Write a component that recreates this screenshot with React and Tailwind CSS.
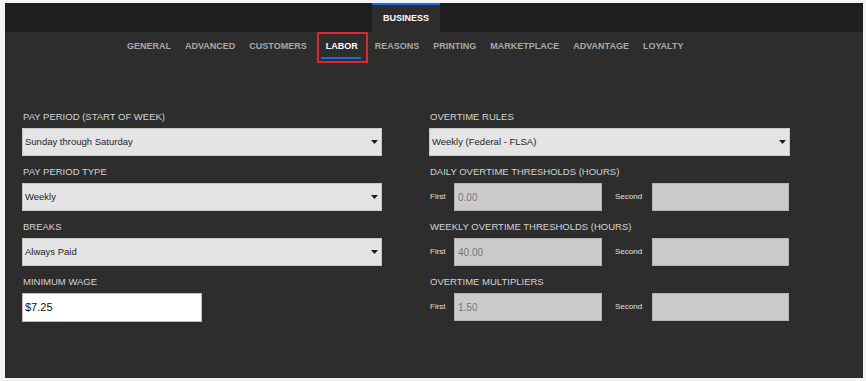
import React from "react";

const tabs = ["GENERAL", "ADVANCED", "CUSTOMERS", "LABOR", "REASONS", "PRINTING", "MARKETPLACE", "ADVANTAGE", "LOYALTY"];

const Arrow = () => (
  <svg width="7" height="4" viewBox="0 0 7 4" className="absolute right-[3px] top-1/2 -translate-y-1/2">
    <path d="M0 0 L7 0 L3.5 4 Z" fill="#1c1c1c" />
  </svg>
);

// fake select box, just the look of it
const Select = ({ value }) => (
  <div className="relative flex items-center h-[28px] bg-[#e4e4e4] border border-[#c8c8c8] pl-[2px] text-[9.5px] text-[#1e1e1e]">
    {value}
    <Arrow />
  </div>
);

const Field = ({ label, children }) => (
  <div className="flex flex-col">
    <div className="h-[12px] mb-[5px] leading-[12px] text-[9.5px] text-[#d4d4d4] pl-[1px]">{label}</div>
    {children}
  </div>
);

const Pair = ({ first }) => (
  <div className="flex items-center h-[28px]">
    <span className="w-[25px] pl-[1px] text-[8px] text-[#e0e0e0]">First</span>
    <div className="w-[148px] h-[28px] flex items-center bg-[#cbcbcb] border border-[#b3b3b3] pl-[3px] text-[10px] text-[#777]">
      {first}
    </div>
    <span className="ml-[13px] w-[37px] text-[8px] text-[#e0e0e0]">Second</span>
    <div className="w-[137px] h-[28px] bg-[#cbcbcb] border border-[#b3b3b3]" />
  </div>
);

export default function App() {
  return (
    <div
      className="w-full h-[381px] bg-[#f3f3f3] pt-[3px] pl-[5px] pr-[3px] pb-[3px]"
      style={{ fontFamily: '"Liberation Sans", Arial, sans-serif' }}
    >
      <div className="h-full flex flex-col bg-[#2d2d2d]">
        {/* top bar */}
        <div className="h-[29px] bg-[#1e1e1e] flex pl-[367px]">
          <div className="w-[68px] h-full bg-[#2d2d2d] border-t-2 border-[#1b6be0] flex items-center justify-center text-[9px] font-bold text-white">
            BUSINESS
          </div>
        </div>

        {/* sub tabs */}
        <div className="h-[30px] flex items-center pl-[122px] gap-[14px]">
          {tabs.map((t) =>
            t === "LABOR" ? (
              <div key={t} className="relative ml-[5px] mr-[3px] text-[9px] font-bold text-white">
                {t}
                <div className="absolute left-[-5px] right-[-3px] bottom-[-5px] h-[2px] bg-[#1b6be0]" />
                <div className="absolute left-[-9px] right-[-10px] top-[-8px] bottom-[-9px] border-2 border-[#e0262e]" />
              </div>
            ) : (
              <div key={t} className="text-[9px] font-bold text-[#a8a8a8]">
                {t}
              </div>
            )
          )}
        </div>

        {/* form */}
        <div className="pt-[49px] pl-[17px] flex gap-x-[47px]">
          <div className="w-[360px] flex flex-col gap-[10px]">
            <Field label="PAY PERIOD (START OF WEEK)">
              <Select value="Sunday through Saturday" />
            </Field>
            <Field label="PAY PERIOD TYPE">
              <Select value="Weekly" />
            </Field>
            <Field label="BREAKS">
              <Select value="Always Paid" />
            </Field>
            <Field label="MINIMUM WAGE">
              <div className="w-[180px] h-[29px] flex items-center bg-white border border-[#bbb] pl-[2px] text-[11px] text-[#111]">
                $7.25
              </div>
            </Field>
          </div>

          <div className="w-[361px] flex flex-col gap-[10px]">
            <Field label="OVERTIME RULES">
              <Select value="Weekly (Federal - FLSA)" />
            </Field>
            <Field label="DAILY OVERTIME THRESHOLDS (HOURS)">
              <Pair first="0.00" />
            </Field>
            <Field label="WEEKLY OVERTIME THRESHOLDS (HOURS)">
              <Pair first="40.00" />
            </Field>
            <Field label="OVERTIME MULTIPLIERS">
              <Pair first="1.50" />
            </Field>
          </div>
        </div>
      </div>
    </div>
  );
}
